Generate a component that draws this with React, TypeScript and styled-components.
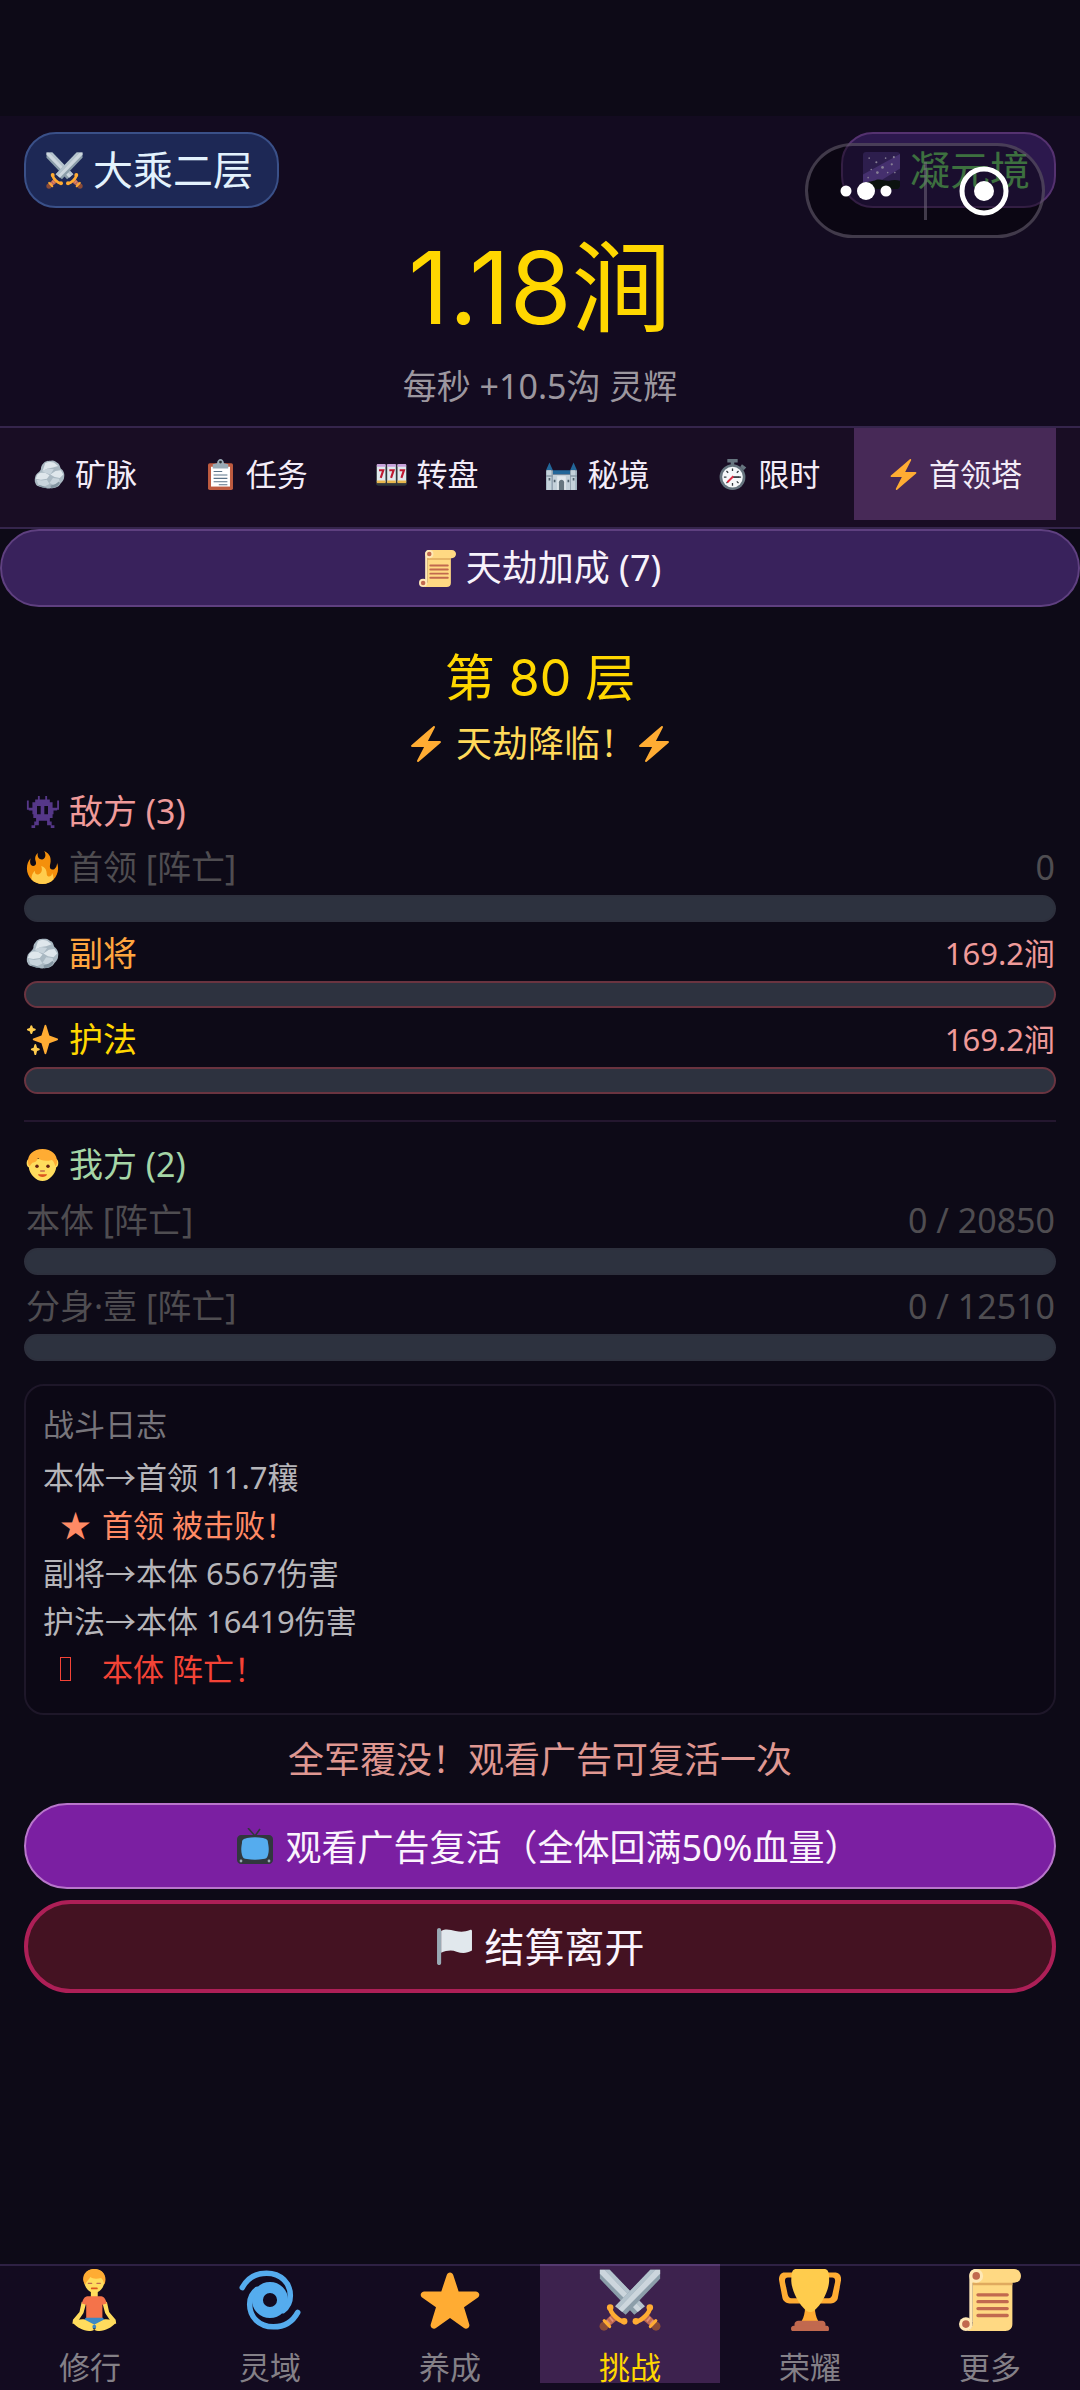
import React, { FC, ReactNode } from 'react';
import styled, { createGlobalStyle } from 'styled-components';

const GlobalStyle = createGlobalStyle`
  * {
    box-sizing: border-box;
  }
  body {
    margin: 0;
    background: #0d0a17;
    color: #ffffff;
    font-family: 'Noto Sans', 'Noto Sans CJK SC', sans-serif;
  }
  button {
    font-family: inherit;
    margin: 0;
    cursor: pointer;
  }
`;

type IconName =
  | 'swords'
  | 'galaxy'
  | 'rock'
  | 'clipboard'
  | 'slots'
  | 'castle'
  | 'stopwatch'
  | 'bolt'
  | 'scroll'
  | 'monster'
  | 'fire'
  | 'sparkles'
  | 'face'
  | 'tv'
  | 'flag'
  | 'lotus'
  | 'cyclone'
  | 'star'
  | 'trophy';

const Sword: FC = () => (
  <>
    <path fill="#8c9eaa" d="M35.5 0.500v5.200L15.500 26.600l-6.100-5L29.800 0.500z" />
    <path fill="#b4c3cd" d="M29.800 0.500h3L11.200 23.100l-1.800-1.500z" />
    <path fill="#ccd6dd" d="M32.800 0.500h2.700v2.200L13.500 25l-2.300-1.900z" />
    <path fill="#c1694f" d="M7.400 26.300l3 3.300-5.600 4.700-2.600-2.800z" />
    <path stroke="#e08f78" strokeWidth="1" d="M6.200 28l2 2.400M4.400 29.800l2 2.300" />
    <circle cx="2.900" cy="33.200" r="2.600" fill="#8a4b38" />
    <path d="M6.500 22.400c-.2 3 5.500 8.400 8.100 8" fill="none" stroke="#ffac33" strokeWidth="2.600" strokeLinecap="round" />
    <circle cx="6.500" cy="22.400" r="1.900" fill="#ffac33" />
    <circle cx="14.600" cy="30.400" r="1.900" fill="#ffac33" />
    <path d="M3 30l3.200 3.400" stroke="#ffac33" strokeWidth="1.800" strokeLinecap="round" />
  </>
);

const glyphs: Record<IconName, ReactNode> = {
  swords: (
    <>
      <g transform="translate(36 0) scale(-1 1)">
        <Sword />
      </g>
      <Sword />
    </>
  ),
  galaxy: (
    <>
      <rect width="36" height="36" rx="3" fill="#4b3380" />
      <path fill="#7350b8" d="M0 22L36 2v14L14 30H0z" />
      <path fill="#14201a" d="M0 31c5-3 9-2 13-4 4-1 8 1 12 1 4-1 8-1 11 0v5c0 2-1 3-3 3H3c-2 0-3-1-3-3z" />
      <g fill="#e0d4f7">
        <circle cx="6" cy="6" r=".8" />
        <circle cx="13" cy="10" r="1" />
        <circle cx="22" cy="6" r=".8" />
        <circle cx="30" cy="5" r="1" />
        <circle cx="28" cy="12" r="1.100" />
        <circle cx="19" cy="15" r="1.300" />
        <circle cx="14" cy="20" r="1.300" />
        <circle cx="8" cy="17" r=".8" />
        <circle cx="24" cy="20" r=".8" />
        <circle cx="31" cy="20" r=".8" />
        <circle cx="5" cy="25" r=".8" />
      </g>
    </>
  ),
  rock: (
    <>
      <path fill="#a9b8c2" d="M11 5c2-3 6-3 9-3 3-1 6 2 8 3 2 2 2 4 3 6 3 2 5 6 4 10 0 4-3 6-5 9-3 4-8 4-11 4-3 1-5-1-8-1-4-1-8-1-9-4-2-3-1-7 0-10 2-3 5-4 6-7 0-3 1-5 3-7z" />
      <path fill="#dfe7ec" d="M13 5c3-2 7-2 10-1l5 4-6 2-6 1-6 3zM4 18c3-3 6-2 9-2l5 3-3 4-7 1-6-1zM19 18l6-4 6-1 3 5-4 4-6-1z" />
      <path fill="#c8d4dc" d="M9 14l7-3 7 1-4 6-6-2zM3 24l6 1 6-1 3 5-6 3-7-2zM18 28l4-6 7 1 1 4-5 4z" />
      <path fill="#8496a2" d="M19 31l6-2 4-3 1 2c-2 4-6 6-10 6zM5 30l7 2 4 2c-4 0-9-1-11-4z" />
    </>
  ),
  clipboard: (
    <>
      <rect x="3.500" y="5" width="29" height="31" rx="2" fill="#be5b40" />
      <rect x="7" y="9" width="22" height="23" fill="#ffffff" />
      <path fill="#99aab5" d="M9 11V6l5-1c0-3 2-5 4-5s4 2 4 5l5 1v5z" />
      <circle cx="18" cy="3.500" r="1.600" fill="#292f33" />
      <path stroke="#5b7388" strokeWidth="1.200" d="M10 14.500h10M10 18.500h16M10 22.500h16M10 26.500h16M16 30h10" />
    </>
  ),
  slots: (
    <>
      <rect y="6" width="36" height="25" rx="3" fill="#31373d" />
      {[1, 13, 25].map((x) => (
        <g key={x}>
          <rect x={x} y="6" width="10" height="22" rx="1.500" fill="#e1e8ed" />
          <rect x={x} y="6" width="10" height="3" fill="#c9a0dc" />
          <rect x={x} y="25" width="10" height="3" fill="#e8b64c" />
          <path d={`M${x + 2.5} 13h5l-3 9`} fill="none" stroke="#be1931" strokeWidth="2.400" />
        </g>
      ))}
    </>
  ),
  castle: (
    <>
      <path fill="#226699" d="M4 4l4 9H0zM32 4l4 9h-8zM8 13h20v5H8z" />
      <path fill="#9fb1be" d="M0 13h8v23H0zM28 13h8v23h-8z" />
      <path fill="#c4d1da" d="M8 18h20v18H8zM1 13h5v23H1zM29 13h5v23h-5z" />
      <path fill="#8899a6" d="M0 19h8v1.500H0zM28 19h8v1.500h-8z" />
      <path fill="#e1e8ed" d="M13 20h10v16H13z" />
      <path fill="#66757f" d="M15 36v-9c0-4 6-4 6 0v9z" />
      <path fill="#50616d" d="M3 22h2v3H3zM31 22h2v3h-2zM9 24h2v3H9zM25 24h2v3h-2z" />
    </>
  ),
  stopwatch: (
    <>
      <path fill="#66757f" d="M12 0h12v4h-4v4h-4V4h-4zM29 6l5 4-3 3-4-4z" />
      <circle cx="18" cy="21" r="15" fill="#66757f" />
      <circle cx="18" cy="21" r="12" fill="#f5f8fa" />
      <path stroke="#31373d" strokeWidth="1.500" d="M18 11v3M18 28v3M8 21h3M25 21h3M11 14l2 2M25 14l-2 2M11 28l2-2M25 28l-2-2" />
      <path stroke="#31373d" strokeWidth="2" d="M18 21h8" />
      <path stroke="#dd2e44" strokeWidth="2.200" d="M19 20l-7 7" />
    </>
  ),
  bolt: (
    <path
      fill="#ffac33"
      d="M32.938 15.651C32.792 15.260 32.418 15 32 15H19.925L26.890 1.458c.219-.426.106-.947-.271-1.243C26.437.071 26.218 0 26 0c-.233 0-.466.082-.653.243L18 6.588 3.347 19.243c-.316.273-.43.714-.284 1.105S3.582 21 4 21h12.075L9.110 34.542c-.219.426-.106.947.271 1.243.182.144.401.215.619.215.233 0 .466-.082.653-.243L18 29.412l14.653-12.655c.317-.273.43-.714.285-1.106z"
    />
  ),
  scroll: (
    <>
      <path fill="#ffe8b6" d="M6 31V4c0-2.500 1.500-4 4-4h21v8H8v23z" />
      <path fill="#ffd983" d="M8 5h23v27c0 2.500-1.500 4-4 4H3c3 0 5-2 5-5z" />
      <path fill="#ffd983" d="M10 0h22c2.300 0 4 1.800 4 4s-1.700 4-4 4H10z" />
      <path fill="#e0aa5e" d="M8 8h23v1.500H8z" />
      <circle cx="10" cy="4" r="4" fill="#ffe8b6" />
      <circle cx="10" cy="4" r="2.200" fill="#c1694f" />
      <circle cx="4" cy="32" r="4" fill="#ffe8b6" />
      <circle cx="4" cy="32" r="2.200" fill="#c1694f" />
      <path stroke="#c1694f" strokeWidth="1.900" strokeLinecap="round" d="M11 15h17M11 19h17M11 23h17M11 27h17" />
    </>
  ),
  monster: (
    <path
      fill="#553788"
      d="M13 1h2v4h6V1h2v4h3v3h3v6h5V6h2v10h-2v1h-4v4h-1v4h-3v4h2v4h-5v-5H14v5H9v-4h2v-4H8v-4H7v-4H3v-1H1V6h2v8h4V8h3V5h3zM12 12v9h4v-9zM20 12v9h4v-9zM6 33h4v3H6zM27 33h4v3h-4z"
      fillRule="evenodd"
    />
  ),
  fire: (
    <>
      <path
        fill="#f4900c"
        d="M35 19c0-2.062-.367-4.039-1.040-5.868-.46 5.389-3.333 8.157-6.335 6.868-2.812-1.208-.917-5.917-.777-8.164.236-3.809-.012-8.169-6.931-11.794 2.875 5.500.333 8.917-2.333 9.125-2.958.231-5.667-2.542-4.667-7.042-3.238 2.386-3.332 6.402-2.333 9 1.042 2.708-.042 4.958-2.583 5.208-2.840.280-4.418-3.041-2.963-8.333C2.520 10.965 1 14.805 1 19c0 9.389 7.611 17 17 17s17-7.611 17-17z"
      />
      <path
        fill="#ffcc4d"
        d="M28.394 23.999c.148 3.084-2.561 4.293-4.019 3.709-2.106-.843-1.541-2.291-2.083-5.291s-2.625-5.083-5.708-6c2.250 6.333-1.247 8.667-3.080 9.084-1.872.426-3.753-.001-3.968-4.007C7.352 23.668 6 26.676 6 30c0 .368.023.730.055 1.090C9.125 34.124 13.342 36 18 36s8.875-1.876 11.945-4.910c.032-.360.055-.722.055-1.090 0-2.187-.584-4.236-1.606-6.001z"
      />
    </>
  ),
  sparkles: (
    <>
      <path
        fill="#ffac33"
        d="M34.347 16.893l-8.899-3.294-3.323-10.891c-.128-.42-.517-.708-.956-.708-.439 0-.828.288-.956.708l-3.322 10.891-8.900 3.294c-.393.146-.653.519-.653.938 0 .418.260.793.653.938l8.895 3.293 3.324 11.223c.126.424.516.715.959.715.442 0 .833-.291.959-.716l3.324-11.223 8.896-3.293c.391-.144.652-.518.652-.937 0-.418-.261-.792-.653-.938z"
      />
      <path
        fill="#ffcc4d"
        d="M14.347 27.894l-2.314-.856-.9-3.300c-.118-.436-.513-.738-.964-.738-.451 0-.846.302-.965.737l-.9 3.300-2.313.856c-.393.146-.653.520-.653.938 0 .418.260.793.653.938l2.301.853.907 3.622c.112.444.511.756.970.756.459 0 .858-.312.970-.757l.907-3.622 2.301-.853c.393-.144.653-.519.653-.937 0-.418-.260-.793-.653-.937zM10.009 6.231l-2.364-.875-.876-2.365c-.145-.393-.519-.653-.938-.653-.418 0-.792.260-.938.653l-.875 2.365-2.365.875c-.393.146-.653.520-.653.938 0 .418.260.793.653.938l2.365.875.875 2.365c.146.393.520.653.938.653.418 0 .792-.260.938-.653l.875-2.365 2.365-.875c.393-.146.653-.520.653-.938 0-.418-.260-.792-.653-.938z"
      />
    </>
  ),
  face: (
    <>
      <path fill="#ffdc5d" d="M3 12h30c3 1 3 8 0 9-1 8-8 15-15 15S4 29 3 21c-3-1-3-8 0-9z" />
      <path fill="#ffac33" d="M18 1c10 0 16 6 16 14 0 2-1 4-2 5-1-4-2-6-4-7-6 2-12 1-15-2-1 4-4 5-6 5-1 1-2 2-3 4-1-1-2-3-2-5C2 7 8 1 18 1z" />
      <circle cx="12" cy="20" r="1.900" fill="#662113" />
      <circle cx="24" cy="20" r="1.900" fill="#662113" />
      <path d="M16 25h4" stroke="#c1694f" strokeWidth="1.600" strokeLinecap="round" />
      <path fill="#dd551f" d="M13 28.500h10c-1 4-9 4-10 0z" />
    </>
  ),
  tv: (
    <>
      <path d="M11 0l7 8 5-7" fill="none" stroke="#31373d" strokeWidth="1.600" />
      <path fill="#31373d" d="M4 7h28c2 0 4 2 4 4v21c0 2-2 4-4 4H4c-2 0-4-2-4-4V11c0-2 2-4 4-4z" />
      <path fill="#55acee" d="M10 10c5-1 11-1 16 0 4 1 5 2 5 5 1 5 1 8 0 12-1 3-2 4-5 4-5 1-11 1-16 0-3 0-4-1-5-4-1-4-1-7 0-12 0-3 1-4 5-5z" />
      <circle cx="4" cy="33" r="1.400" fill="#99aab5" />
      <circle cx="32" cy="33" r="1.400" fill="#99aab5" />
    </>
  ),
  flag: (
    <>
      <path fill="#e1e8ed" d="M5 3c5-3 9-1 14 0s9 1 14-1c1-.5 2 0 2 1v19c-5 3-10 3-15 1s-10-1-15 1z" />
      <path fill="#99aab5" d="M1 2c0-2.600 4-2.600 4 0v32c0 2.600-4 2.600-4 0z" />
    </>
  ),
  lotus: (
    <>
      <path fill="#ffdc5d" d="M18.500 12h4v5h-4z" />
      <path fill="#ffdc5d" d="M13.200 19l2.400 1.500-1.400 5-4 6-2.400.300.300-2.300 3.800-4.500zM27.800 19l-2.400 1.500 1.400 5 4 6 2.400.300-.300-2.300-3.800-4.500z" />
      <path fill="#f4734a" d="M16.500 15.800h8c1.700.2 2.700 1.800 3.200 4.200l-2.500.8V29h-9.400v-8.200l-2.500-.8c.5-2.400 1.500-4 3.200-4.200z" />
      <path fill="#3b88c3" d="M15.500 28.300h10l1.500 2.200-5 4h-3l-5-4z" />
      <path fill="#ffdc5d" d="M14.500 29.200l7 3.600c.5 2.400-1.500 3.200-4 3.200-3.500-.2-7-2-9.500-4.800 2-1.700 4-2.200 6.500-2zM26.500 29.200l-7 3.600c-.5 2.400 1.500 3.200 4 3.200 3.500-.2 7-2 9.500-4.800-2-1.700-4-2.200-6.500-2z" />
      <path fill="#ffdc5d" d="M14.400 6c0-8 12.200-8 12.200 0 0 4.500-3 7.800-6.100 7.800S14.400 10.500 14.400 6z" />
      <path fill="#ffac33" d="M20.500 0c4 0 6.500 2.600 6.500 6 0 1.300-.3 2.300-.8 3-.3-2-.9-3.200-1.800-3.800-2.800.8-4.700.500-6.200-.5-.8 1.600-2.200 2.300-3 4.300-.700-1-1.200-1.900-1.200-3C14 2.600 16.500 0 20.500 0z" />
      <path d="M17 8.300h2M22 8.300h2" stroke="#c1694f" strokeWidth=".7" strokeLinecap="round" />
      <path d="M19 11.300h3" stroke="#dd551f" strokeWidth="1" strokeLinecap="round" />
    </>
  ),
  cyclone: (
    <>
      <circle cx="18" cy="18" r="7.300" fill="none" stroke="#55acee" strokeWidth="6.400" />
      <g fill="none" stroke="#55acee" strokeWidth="3.200" strokeLinecap="round">
        <path d="M1.900 10.800C5 5 10 2.400 16 2.400c8.500 0 13.800 5.800 13.800 13.100 0 3.600-1.600 6.700-4.300 8.700" />
        <path d="M34.100 25.200C31 31 26 33.600 20 33.600c-8.500 0-13.800-5.800-13.800-13.100 0-3.600 1.600-6.700 4.300-8.700" />
      </g>
    </>
  ),
  star: (
    <path
      fill="#ffac33"
      d="M27.287 34.627c-.404 0-.806-.124-1.152-.371L18 28.422l-8.135 5.834c-.343.247-.744.371-1.147.371-.408 0-.817-.126-1.163-.378-.688-.499-.977-1.385-.719-2.194l3.034-9.792-8.062-5.681c-.685-.505-.970-1.393-.708-2.203.264-.809 1.016-1.357 1.866-1.363L12.947 13l3.179-9.549c.268-.809 1.023-1.353 1.874-1.353.851 0 1.606.545 1.875 1.353L23 13l10.036.015c.853.006 1.606.556 1.867 1.363.263.810-.022 1.698-.708 2.203l-8.062 5.681 3.034 9.792c.260.809-.033 1.695-.720 2.194-.347.254-.753.379-1.160.379z"
    />
  ),
  trophy: (
    <>
      <path
        fill="#ffac33"
        d="M5.123 5h6C12.227 5 13 4.896 13 6V4c0-1.104-.773-2-1.877-2h-8c-2 0-3.583 2.125-3 5 0 0 1.791 9.375 1.917 9.958C2.373 18.500 4.164 20 6.081 20h6.958c1.105 0-.039-1.896-.039-3v-2c0 1.104-.773 2-1.877 2h-4c-1.104 0-1.833-1.042-2-2S3.539 7.667 3.539 7.667C3.206 5.750 4.018 5 5.123 5zm25.812 0h-6C23.831 5 22 4.896 22 6V4c0-1.104 1.831-2 2.935-2h8c2 0 3.584 2.125 3 5 0 0-1.633 9.419-1.771 10-.354 1.500-2.042 3-4 3h-7.146C21.914 20 22 18.104 22 17v-2c0 1.104 1.831 2 2.935 2h4c1.104 0 1.834-1.042 2-2s1.584-7.333 1.584-7.333C32.851 5.750 32.040 5 30.935 5zM20.832 22c0-6.958-2.709 0-2.709 0s-3-6.958-3 0-3.291 10-3.291 10h12.292c-.001 0-3.292-3.042-3.292-10z"
      />
      <path fill="#ffcc4d" d="M29.123 6.577c0 6.775-6.770 18.423-11 18.423-4.231 0-11-11.649-11-18.423 0-5.577 1-6.577 3-6.577h16c2 0 3 1 3 6.577z" />
      <path
        fill="#c1694f"
        d="M27 33c0 1.104.227 2-.877 2h-16C9.018 35 9 34.104 9 33v-1c0-1.104 1.164-2 2.206-2h13.917c1.042 0 1.877.896 1.877 2v1z"
      />
      <path
        fill="#c1694f"
        d="M29 34.625c0 .760.165 1.375-1.252 1.375H8.498C7.206 36 7 35.385 7 34.625v-.25C7 33.615 7.738 33 8.498 33h19.250c.759 0 1.252.615 1.252 1.375v.25z"
      />
    </>
  ),
};

const SIcon = styled.svg<{ $size: number }>`
  display: block;
  flex: none;
  width: ${({ $size }) => $size}px;
  height: ${({ $size }) => $size}px;
`;

const Icon: FC<{ name: IconName; size: number }> = ({ name, size }) => (
  <SIcon $size={size} viewBox="0 0 36 36" aria-hidden="true">
    {glyphs[name]}
  </SIcon>
);

const SPage = styled.div`
  position: relative;
  display: flex;
  flex-direction: column;
  min-height: 100vh;
  padding-top: 116px;
`;

const SHeader = styled.header`
  background: #130b20;
  padding: 16px 24px 20px;
  text-align: center;
`;

const SBadgeRow = styled.div`
  display: flex;
  justify-content: space-between;
`;

const SBadge = styled.button<{ $tone: 'blue' | 'purple' }>`
  display: flex;
  align-items: center;
  gap: 10px;
  height: 76px;
  padding: 0 24px 0 20px;
  font-size: 40px;
  line-height: 48px;
  border-radius: 32px;
  border: 2px solid ${({ $tone }) => ($tone === 'blue' ? '#3a5088' : '#553270')};
  background: ${({ $tone }) => ($tone === 'blue' ? '#1d2855' : '#2c184d')};
  color: ${({ $tone }) => ($tone === 'blue' ? '#e3f2fd' : '#66bb6a')};
`;

const SAmount = styled.div`
  margin-top: 30px;
  color: #ffd700;
  font-family: Inter, 'Noto Sans CJK SC', sans-serif;
  font-size: 100px;
  line-height: 100px;
`;

const SRate = styled.div`
  margin-top: 28px;
  color: #9c979f;
  font-size: 34px;
  line-height: 40px;
`;

// The host app's own menu, which floats over the page
const SCapsule = styled.div`
  position: absolute;
  top: 143px;
  right: 35px;
  display: flex;
  align-items: center;
  width: 240px;
  height: 95px;
  border: 3px solid rgba(120, 110, 130, 0.5);
  border-radius: 48px;
  background: rgba(0, 0, 0, 0.4);
`;

const SCapsuleButton = styled.button`
  flex: 1;
  display: flex;
  align-items: center;
  justify-content: center;
  height: 58px;
  padding: 0;
  border: 0;
  background: none;

  & + & {
    border-left: 3px solid rgba(120, 110, 130, 0.5);
  }
`;

const STabs = styled.nav`
  display: flex;
  align-items: flex-start;
  height: 103px;
  padding-right: 24px;
  border-top: 2px solid #35254c;
  border-bottom: 2px solid #35254c;
  background: #190d24;
`;

const STab = styled.button<{ $active: boolean }>`
  flex: 1 1 auto;
  display: flex;
  align-items: center;
  justify-content: center;
  gap: 10px;
  height: 92px;
  padding: 0;
  border: 0;
  background: ${({ $active }) => ($active ? '#472957' : 'transparent')};
  color: #f3ecf8;
  font-size: 31px;
  line-height: 40px;
  white-space: nowrap;
`;

const SBonusButton = styled.button`
  display: flex;
  align-items: center;
  justify-content: center;
  gap: 10px;
  width: 100%;
  height: 78px;
  border: 2px solid #5f4080;
  border-radius: 39px;
  background: #39225c;
  color: #f7f2fb;
  font-size: 36px;
  line-height: 44px;
`;

const SMain = styled.main`
  flex: 1;
  padding: 41px 24px 60px;
`;

const SFloor = styled.h1`
  margin: 0;
  color: #ffd700;
  font-family: Inter, 'Noto Sans CJK SC', sans-serif;
  font-size: 50px;
  font-weight: 400;
  line-height: 60px;
  text-align: center;
`;

const SWarning = styled.div`
  display: flex;
  align-items: center;
  justify-content: center;
  margin: 14px 0 25px;
  color: #ffd95a;
  font-size: 36px;
  line-height: 44px;
`;

const SWarningText = styled.span`
  margin-left: 12px;
`;

const SSide = styled.section`
  & + & {
    margin-top: 26px;
    padding-top: 22px;
    border-top: 2px solid #24172f;
  }
`;

const SSideTitle = styled.h2<{ $color: string }>`
  display: flex;
  align-items: center;
  gap: 10px;
  margin: 0 0 16px;
  padding-left: 2px;
  color: ${({ $color }) => $color};
  font-size: 34px;
  font-weight: 400;
  line-height: 40px;
`;

const SUnit = styled.div`
  & + & {
    margin-top: 11px;
  }
`;

const SUnitRow = styled.div<{ $color: string }>`
  display: flex;
  align-items: center;
  gap: 10px;
  padding: 0 1px 0 2px;
  color: ${({ $color }) => $color};
  font-size: 34px;
  line-height: 40px;
`;

const SUnitHp = styled.span<{ $alive: boolean }>`
  margin-left: auto;
  color: ${({ $alive }) => ($alive ? '#ef9a9a' : 'inherit')};
  font-size: ${({ $alive }) => ($alive ? 31 : 34)}px;
`;

const SBar = styled.div<{ $alive: boolean }>`
  height: 27px;
  margin-top: 8px;
  border: 2px solid ${({ $alive }) => ($alive ? '#6a3440' : '#2d303d')};
  border-radius: 14px;
  background: #2d323f;
  overflow: hidden;
`;

const SBarFill = styled.div`
  height: 100%;
  background: #e53935;
`;

const SLog = styled.section`
  margin-top: 23px;
  padding: 14px 17px 20px;
  border: 2px solid #1e1729;
  border-radius: 20px;
  background: #0c0815;
  font-size: 31px;
  line-height: 48px;
`;

const SLogTitle = styled.h2`
  margin: 0 0 5px;
  color: #77757b;
  font-size: 31px;
  font-weight: 400;
  line-height: 48px;
`;

const SLogLine = styled.div<{ $color?: string; $indent?: boolean }>`
  display: flex;
  align-items: center;
  padding-left: ${({ $indent }) => ($indent ? 17 : 0)}px;
  color: ${({ $color }) => $color ?? '#b6b5b9'};
`;

const SLogMark = styled.span`
  flex: none;
  width: 42px;
`;

const SMissingMark = styled.span`
  display: block;
  width: 11px;
  height: 24px;
  border: 1px solid currentColor;
`;

const SNotice = styled.p`
  margin: 23px 0 21px;
  color: #df9791;
  font-size: 36px;
  line-height: 44px;
  text-align: center;
`;

const SAction = styled.button<{ $kind: 'revive' | 'leave' }>`
  display: flex;
  align-items: center;
  justify-content: center;
  gap: 12px;
  width: 100%;
  height: ${({ $kind }) => ($kind === 'revive' ? 86 : 93)}px;
  border: ${({ $kind }) => ($kind === 'revive' ? '2px solid #b876cb' : '4px solid #ad1f57')};
  border-radius: 47px;
  background: ${({ $kind }) => ($kind === 'revive' ? '#7b1fa2' : '#441222')};
  color: #fbf4fd;
  font-size: ${({ $kind }) => ($kind === 'revive' ? 36 : 40)}px;
  line-height: 48px;

  & + & {
    margin-top: 11px;
  }
`;

// Closing bracket without the empty half of its full-width box
const SHalfWidth = styled.span`
  font-family: 'Noto Sans CJK SC', sans-serif;
  font-feature-settings: 'halt' 1;
`;

const SBottomNav = styled.nav`
  display: grid;
  grid-template-columns: repeat(6, 1fr);
  padding-bottom: 7px;
  background: #130b20;
`;

const SBottomItem = styled.button<{ $active: boolean }>`
  display: flex;
  flex-direction: column;
  align-items: center;
  gap: 20px;
  padding: 3px 0 0;
  border: 0;
  border-top: 2px solid ${({ $active }) => ($active ? '#553a70' : '#2e2144')};
  background: ${({ $active }) => ($active ? '#3d224e' : 'transparent')};
  color: ${({ $active }) => ($active ? '#ffd700' : '#848087')};
  font-size: 31px;
  line-height: 32px;
`;

const tabs: { icon: IconName; label: string }[] = [
  { icon: 'rock', label: '矿脉' },
  { icon: 'clipboard', label: '任务' },
  { icon: 'slots', label: '转盘' },
  { icon: 'castle', label: '秘境' },
  { icon: 'stopwatch', label: '限时' },
  { icon: 'bolt', label: '首领塔' },
];

const bottomItems: { icon: IconName; label: string }[] = [
  { icon: 'lotus', label: '修行' },
  { icon: 'cyclone', label: '灵域' },
  { icon: 'star', label: '养成' },
  { icon: 'swords', label: '挑战' },
  { icon: 'trophy', label: '荣耀' },
  { icon: 'scroll', label: '更多' },
];

interface IUnit {
  icon?: IconName;
  name: string;
  hp: string;
  color: string;
  alive: boolean;
  percent: number;
}

const DEAD = '#4f4d51';

const enemies: IUnit[] = [
  { icon: 'fire', name: '首领 [阵亡]', hp: '0', color: DEAD, alive: false, percent: 0 },
  { icon: 'rock', name: '副将', hp: '169.2涧', color: '#ffa63f', alive: true, percent: 0 },
  { icon: 'sparkles', name: '护法', hp: '169.2涧', color: '#ffd700', alive: true, percent: 0 },
];

const allies: IUnit[] = [
  { name: '本体 [阵亡]', hp: '0 / 20850', color: DEAD, alive: false, percent: 0 },
  { name: '分身·壹 [阵亡]', hp: '0 / 12510', color: DEAD, alive: false, percent: 0 },
];

const Unit: FC<{ unit: IUnit }> = ({ unit }) => (
  <SUnit>
    <SUnitRow $color={unit.color}>
      {unit.icon && <Icon name={unit.icon} size={33} />}
      <span>{unit.name}</span>
      <SUnitHp $alive={unit.alive}>{unit.hp}</SUnitHp>
    </SUnitRow>
    <SBar
      $alive={unit.alive}
      role="progressbar"
      aria-label={unit.name}
      aria-valuemin={0}
      aria-valuemax={100}
      aria-valuenow={unit.percent}
    >
      <SBarFill style={{ width: `${unit.percent}%` }} />
    </SBar>
  </SUnit>
);

const App: FC = () => {
  return (
    <>
      <GlobalStyle />
      <SPage>
        <SHeader>
          <SBadgeRow>
            <SBadge $tone="blue">
              <Icon name="swords" size={37} />
              大乘二层
            </SBadge>
            <SBadge $tone="purple">
              <Icon name="galaxy" size={37} />
              凝元境
            </SBadge>
          </SBadgeRow>
          <SAmount>1.18涧</SAmount>
          <SRate>每秒 +10.5沟 灵辉</SRate>
        </SHeader>

        <SCapsule>
          <SCapsuleButton aria-label="菜单">
            <svg width="52" height="20" viewBox="0 0 52 20" fill="#ffffff">
              <circle cx="6" cy="10" r="5.500" />
              <circle cx="26" cy="10" r="9" />
              <circle cx="46" cy="10" r="5.500" />
            </svg>
          </SCapsuleButton>
          <SCapsuleButton aria-label="关闭">
            <svg width="50" height="50" viewBox="0 0 50 50">
              <circle cx="25" cy="25" r="22" fill="none" stroke="#ffffff" strokeWidth="5" />
              <circle cx="25" cy="25" r="10" fill="#ffffff" />
            </svg>
          </SCapsuleButton>
        </SCapsule>

        <STabs>
          {tabs.map((tab) => (
            <STab key={tab.label} $active={tab.label === '首领塔'}>
              <Icon name={tab.icon} size={31} />
              {tab.label}
            </STab>
          ))}
        </STabs>

        <SBonusButton>
          <Icon name="scroll" size={37} />
          天劫加成 (7)
        </SBonusButton>

        <SMain>
          <SFloor>第 80 层</SFloor>
          <SWarning>
            <Icon name="bolt" size={36} />
            <SWarningText>天劫降临！</SWarningText>
            <Icon name="bolt" size={36} />
          </SWarning>

          <SSide>
            <SSideTitle $color="#ef9a9a">
              <Icon name="monster" size={33} />
              敌方 (3)
            </SSideTitle>
            {enemies.map((unit) => (
              <Unit key={unit.name} unit={unit} />
            ))}
          </SSide>
          <SSide>
            <SSideTitle $color="#a5d6a7">
              <Icon name="face" size={33} />
              我方 (2)
            </SSideTitle>
            {allies.map((unit) => (
              <Unit key={unit.name} unit={unit} />
            ))}
          </SSide>

          <SLog>
            <SLogTitle>战斗日志</SLogTitle>
            <SLogLine>本体→首领 11.7穰</SLogLine>
            <SLogLine $color="#ff8a65" $indent>
              <SLogMark>★</SLogMark>首领 被击败！
            </SLogLine>
            <SLogLine>副将→本体 6567伤害</SLogLine>
            <SLogLine>护法→本体 16419伤害</SLogLine>
            <SLogLine $color="#f44336" $indent>
              <SLogMark>
                <SMissingMark />
              </SLogMark>
              本体 阵亡！
            </SLogLine>
          </SLog>

          <SNotice>全军覆没！观看广告可复活一次</SNotice>
          <SAction $kind="revive">
            <Icon name="tv" size={36} />
            <span>
              观看广告复活（全体回满50%血量<SHalfWidth>）</SHalfWidth>
            </span>
          </SAction>
          <SAction $kind="leave">
            <Icon name="flag" size={37} />
            结算离开
          </SAction>
        </SMain>

        <SBottomNav>
          {bottomItems.map((item) => (
            <SBottomItem key={item.label} $active={item.label === '挑战'}>
              <Icon name={item.icon} size={62} />
              {item.label}
            </SBottomItem>
          ))}
        </SBottomNav>
      </SPage>
    </>
  );
};

export default App;
